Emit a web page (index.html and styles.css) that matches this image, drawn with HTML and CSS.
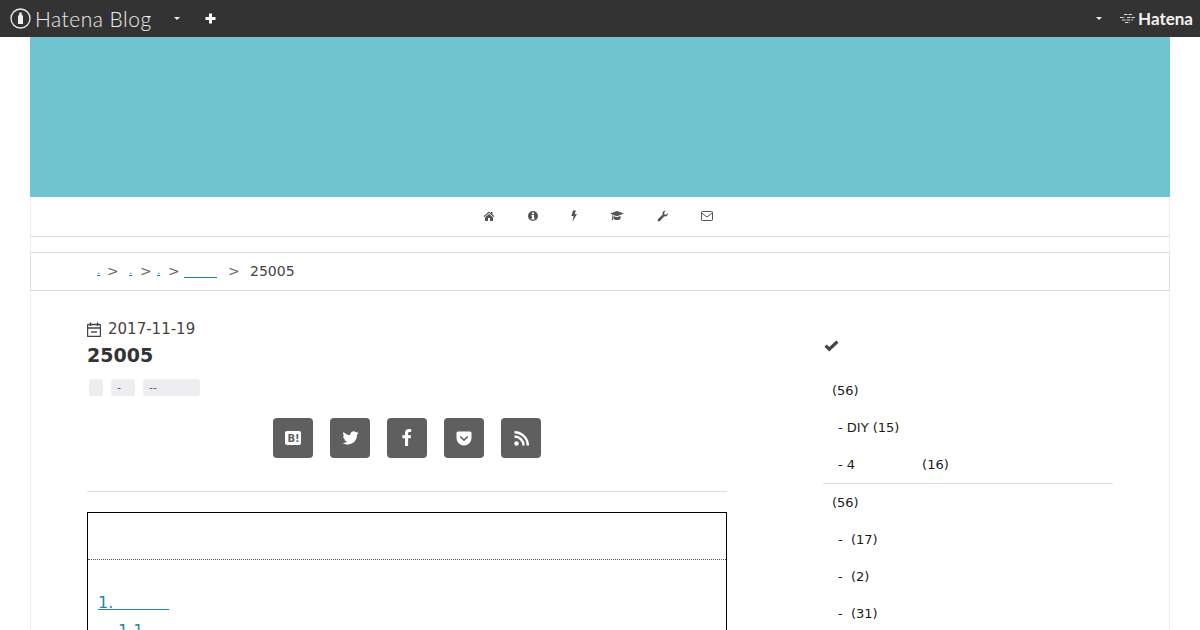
FILE: index.html
```html
<!DOCTYPE html>
<html lang="ja">
<head>
    <meta charset="UTF-8">
    <meta name="viewport" content="width=device-width, initial-scale=1.0">
    <title>25005</title>
    <link rel="stylesheet" href="styles.css">
</head>
<body>
    <div class="topbar">
        <div class="topbar-left">
            <a class="logo-blog" href="#">
                <svg class="logo-mark" width="21" height="21" viewBox="0 0 21 21">
                    <circle cx="10.500" cy="10.500" r="9.500" fill="none" stroke="#eee" stroke-width="1.300"/>
                    <path d="M9.300 4.500h2.400v2l1.300 1.500v8H8V8l1.300-1.500z" fill="#eee"/>
                </svg>
                <span>Hatena Blog</span>
            </a>
            <span class="caret caret-blog"></span>
            <svg class="plus" width="11" height="11" viewBox="0 0 11 11"><path d="M4 0.500h3V4h3.500v3H7v3.500H4V7H0.500V4H4z" fill="#fff"/></svg>
        </div>
        <div class="topbar-right">
            <span class="caret"></span>
            <a class="logo-hatena" href="#">
                <svg width="17" height="12" viewBox="0 0 17 12"><path d="M5 1.500h9M1 4.500h5M8 4.500h8M3 7h11M6 9.500h5" stroke="#ddd" stroke-width="1" stroke-dasharray="3.500 1" fill="none"/></svg>
                <span>Hatena</span>
            </a>
        </div>
    </div>

    <div class="wrap">
        <div class="blog-header"></div>

        <nav class="global-nav">
            <a href="#"><svg width="12" height="12" viewBox="0 0 12 12"><path d="M6 1.500 0.500 6.200l.7.800L6 3l4.800 4 .7-.8L9.500 4.500V2H8v1.200zM2 7.300V11h3V8h2v3h3V7.300L6 4z" fill="#555"/></svg></a>
            <a href="#"><svg width="10" height="12" viewBox="0 0 10 12"><path fill-rule="evenodd" d="M5 1a5 5 0 1 0 0 10A5 5 0 0 0 5 1zM4 2.500h2V4.200H4zM3.500 5h2.500v3.300h.7v1.200H3.300V8.300H4V6.200h-.5z" fill="#555"/></svg></a>
            <a href="#"><svg width="6" height="12" viewBox="0 0 6 12"><path d="M2 .5h3L3.700 4H6L1.500 11.800l1-5.800H.3z" fill="#555"/></svg></a>
            <a href="#"><svg width="14" height="12" viewBox="0 0 14 12"><path d="M7 1 14 3.600 7 6.300 3.200 4.900c-.4.400-.5 1-.5 1.700.3.200.3.600.1.800l.3 2.600H1.800l.3-2.600c-.2-.2-.2-.6.1-.8 0-.9.200-1.600.5-2.100L0 3.600zM3.400 6 7 7.300 10.600 6v2.200C10.600 9.200 9 10 7 10S3.400 9.200 3.400 8.200z" fill="#555"/></svg></a>
            <a href="#"><svg width="11" height="12" viewBox="0 0 11 12"><path d="M10.800 3c.3 1.300-.1 2.500-1.100 3.100-.8.500-1.600.5-2.300.2L2.900 11c-.6.600-1.400.6-1.900.1s-.5-1.400.1-2l4.600-4.700c-.3-.8-.3-1.700.2-2.500C6.500.900 7.600.500 8.900.800L7.200 2.600l.3 1.800 1.700.4z" fill="#555"/></svg></a>
            <a href="#"><svg width="12" height="12" viewBox="0 0 12 12"><path d="M1.200 1.500h9.600a.7.700 0 0 1 .7.700v7.600a.7.700 0 0 1-.7.700H1.200a.7.700 0 0 1-.7-.7V2.200a.7.700 0 0 1 .7-.7zM.8 3l5.200 4 5.200-4" fill="none" stroke="#555" stroke-width="1"/></svg></a>
        </nav>

        <div class="breadcrumb">
            <a class="crumb crumb-first" href="#">.</a>
            <span class="sep">&gt;</span>
            <a class="crumb crumb-mid" href="#">.</a>
            <span class="sep">&gt;</span>
            <a class="crumb crumb-third" href="#">.</a>
            <span class="sep">&gt;</span>
            <a class="crumb crumb-wide" href="#"></a>
            <span class="sep sep-last">&gt;</span>
            <span class="crumb-current">25005</span>
        </div>

        <div class="content">
            <article class="entry">
                <div class="entry-date">
                    <svg width="14" height="15" viewBox="0 0 14 15"><path d="M1.500 2.500h11a1 1 0 0 1 1 1v10a1 1 0 0 1-1 1h-11a1 1 0 0 1-1-1v-10a1 1 0 0 1 1-1zM.5 6h13M3.500.5v3.500M10.500.5v3.500" fill="none" stroke="#444" stroke-width="1.400"/><path d="M4 10h6" stroke="#444" stroke-width="1.400"/></svg>
                    <span>2017-11-19</span>
                </div>
                <h1 class="entry-title">25005</h1>
                <div class="tags">
                    <a class="tag tag-empty" href="#"></a>
                    <a class="tag tag-one" href="#">-</a>
                    <a class="tag tag-two" href="#">--</a>
                </div>
                <div class="share">
                    <a class="share-btn" href="#">
                        <svg width="16" height="14" viewBox="0 0 16 14"><rect width="16" height="14" rx="2" fill="#fff"/><text x="2.400" y="11" class="hb-text">B!</text></svg>
                    </a>
                    <a class="share-btn" href="#">
                        <svg width="17" height="14" viewBox="0 0 17 14"><path d="M16.500 1.800c-.6.300-1.200.4-1.900.5.700-.4 1.200-1 1.400-1.800-.6.400-1.300.6-2.100.8A3.300 3.300 0 0 0 8.300 4.300C5.600 4.200 3.200 2.900 1.600 1c-.9 1.500-.4 3.400 1 4.400-.5 0-1-.2-1.500-.4 0 1.600 1.100 3 2.600 3.300-.5.100-1 .1-1.500 0 .4 1.300 1.600 2.200 3.100 2.300A6.700 6.700 0 0 1 .5 12c1.500.9 3.200 1.500 5.100 1.500 6.200 0 9.600-5.100 9.400-9.800.6-.5 1.200-1.100 1.500-1.900z" fill="#fff"/></svg>
                    </a>
                    <a class="share-btn share-fb" href="#">
                        <svg width="10" height="17" viewBox="0 0 10 17"><path d="M9.200.2v2.700H7.600c-1.200 0-1.500.6-1.500 1.500v1.900h3l-.4 3H6.100v7.700H3V9.300H.4v-3H3V4C3 1.400 4.600 0 6.900 0c1.100 0 2 .1 2.300.2z" fill="#fff"/></svg>
                    </a>
                    <a class="share-btn" href="#">
                        <svg width="16" height="15" viewBox="0 0 16 15"><path fill-rule="evenodd" d="M2 0.500h12A1.500 1.500 0 0 1 15.500 2v5a7.500 7.500 0 0 1-15 0V2A1.500 1.500 0 0 1 2 .5zM4.800 5l3.200 3.100L11.200 5l1.100 1.100L8 10.300 3.700 6.100z" fill="#fff"/></svg>
                    </a>
                    <a class="share-btn" href="#">
                        <svg width="15" height="15" viewBox="0 0 15 15"><circle cx="2.500" cy="12.500" r="2.200" fill="#fff"/><path d="M0.500 5.500a9 9 0 0 1 9 9M0.500 1.200a13.300 13.300 0 0 1 13.300 13.300" fill="none" stroke="#fff" stroke-width="2.400"/></svg>
                    </a>
                </div>
                <div class="toc">
                    <div class="toc-head"></div>
                    <div class="toc-body">
                        <a class="toc-item" href="#">1.&nbsp;&nbsp;&nbsp;&nbsp;&nbsp;&nbsp;&nbsp;&nbsp;&nbsp;&nbsp;&nbsp;</a>
                        <a class="toc-item toc-sub" href="#">1.1</a>
                    </div>
                </div>
            </article>

            <aside class="sidebar">
                <svg class="side-check" width="15" height="12" viewBox="0 0 15 12"><path d="M5.300 11.500.5 6.700l2.200-2.200 2.600 2.600L12.300.5l2.200 2.200z" fill="#444"/></svg>
                <ul class="cat-list">
                    <li>(56)</li>
                    <li class="cat-child">- DIY (15)</li>
                    <li class="cat-child">- 4<span class="cat-gap"></span>(16)</li>
                </ul>
                <ul class="cat-list cat-list-second">
                    <li>(56)</li>
                    <li class="cat-child">- &nbsp;(17)</li>
                    <li class="cat-child">- &nbsp;(2)</li>
                    <li class="cat-child">- &nbsp;(31)</li>
                </ul>
            </aside>
        </div>
    </div>
</body>
</html>
```

FILE: styles.css
```css
* {
    margin: 0;
    padding: 0;
    box-sizing: border-box;
}

html, body {
    height: 630px;
    overflow: hidden;
}

body {
    background-color: white;
    font-family: "DejaVu Sans", sans-serif;
    color: #333;
}

a {
    color: #1f87a5;
}

.topbar {
    display: flex;
    justify-content: space-between;
    align-items: center;
    height: 37px;
    background-color: #333;
    padding: 0 7px 0 10px;
}

.topbar-left,
.topbar-right {
    display: flex;
    align-items: center;
}

.logo-blog {
    display: flex;
    align-items: center;
    gap: 4px;
    color: #eee;
    text-decoration: none;
    font-family: "Lato", sans-serif;
    font-weight: 300;
    font-size: 21px;
    letter-spacing: 0.5px;
}

.caret {
    width: 0;
    height: 0;
    border-left: 3px solid transparent;
    border-right: 3px solid transparent;
    border-top: 3px solid #eee;
}

.caret-blog {
    margin-left: 22px;
}

.plus {
    margin-left: 25px;
}

.logo-hatena {
    display: flex;
    align-items: center;
    gap: 2px;
    margin-left: 17px;
    color: #f2f2f2;
    text-decoration: none;
    font-family: "Lato", sans-serif;
    font-weight: 700;
    font-size: 17px;
}

.wrap {
    width: 1140px;
    margin: 0 auto;
    border-left: 1px solid #eee;
    border-right: 1px solid #eee;
}

.blog-header {
    height: 160px;
    margin: 0 -1px;
    background-color: #70c4cf;
}

.global-nav {
    display: flex;
    justify-content: center;
    align-items: center;
    gap: 33px;
    height: 40px;
    border-bottom: 1px solid #ddd;
    padding: 0 4px 2px 0;
}

.global-nav a {
    display: flex;
}

.breadcrumb {
    display: flex;
    align-items: center;
    height: 39px;
    margin: 15px -1px 0;
    padding: 0 0 2px 66px;
    border: 1px solid #ddd;
    font-size: 14px;
    color: #444;
}

.crumb {
    font-size: 10px;
}

.crumb-first {
    width: 4px;
    margin-right: 6px;
}

.crumb-mid {
    width: 11px;
    margin-left: 10px;
}

.crumb-third {
    width: 11px;
    margin-left: 5px;
}

.sep {
    width: 12px;
    color: #666;
}

.crumb-wide {
    width: 33px;
    height: 15px;
    margin-left: 4px;
    border-bottom: 1px solid #1f87a5;
}

.sep-last {
    margin-left: 11px;
}

.crumb-current {
    margin-left: 10px;
}

.content {
    display: flex;
    padding: 28px 56px 0;
}

.entry {
    width: 640px;
}

.entry-date {
    display: flex;
    align-items: center;
    gap: 7px;
    height: 20px;
    font-size: 15px;
    color: #444;
}

.entry-title {
    margin-top: 4px;
    font-size: 19px;
    line-height: 24px;
    color: #333;
}

.tags {
    display: flex;
    gap: 8px;
    margin: 12px 0 0 2px;
}

.tag {
    height: 17px;
    padding: 0 6px;
    border-radius: 3px;
    background-color: #eeeef2;
    color: #555;
    font-size: 11px;
    line-height: 17px;
    text-decoration: none;
}

.tag-empty {
    width: 14px;
}

.tag-one {
    width: 24px;
}

.tag-two {
    width: 57px;
}

.share {
    display: flex;
    justify-content: center;
    gap: 17px;
    margin-top: 22px;
    padding-bottom: 33px;
    border-bottom: 1px solid #ddd;
}

.share-btn {
    display: flex;
    align-items: center;
    justify-content: center;
    width: 40px;
    height: 40px;
    border-radius: 4px;
    background-color: #5f5f5f;
}

.share-fb {
    padding-bottom: 2px;
}

.hb-text {
    font-family: "DejaVu Sans", sans-serif;
    font-weight: bold;
    font-size: 10px;
    fill: #5f5f5f;
}

.toc {
    margin-top: 20px;
    border: 1px solid black;
    height: 200px;
}

.toc-head {
    height: 47px;
    border-bottom: 1px dotted #555;
}

.toc-body {
    padding: 33px 10px 0;
}

.toc-item {
    display: block;
    width: fit-content;
    font-size: 16px;
    line-height: 20px;
}

.toc-sub {
    margin: 8px 0 0 20px;
}

.sidebar {
    width: 290px;
    margin-left: 96px;
    padding-top: 21px;
    font-size: 13px;
    color: #1a1a1a;
}

.side-check {
    display: block;
    margin-left: 1px;
}

.cat-list {
    list-style: none;
    margin-top: 20px;
}

.cat-list li {
    height: 37px;
    padding-left: 9px;
    line-height: 37px;
}

.cat-list .cat-child {
    padding-left: 15px;
}

.cat-gap {
    display: inline-block;
    width: 67px;
}

.cat-list-second {
    margin-top: 0;
    border-top: 1px solid #ddd;
}
```
